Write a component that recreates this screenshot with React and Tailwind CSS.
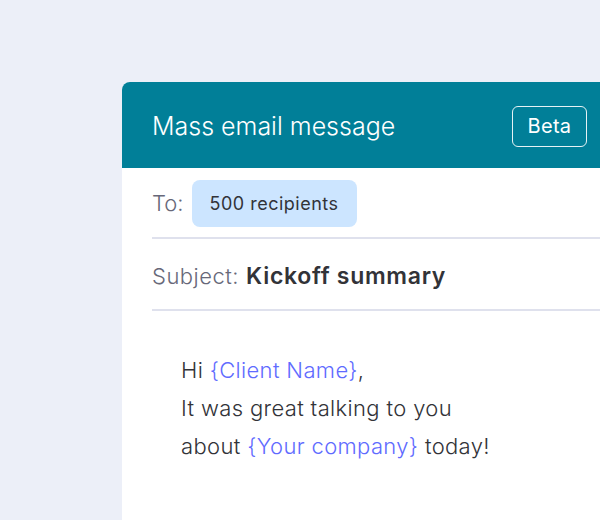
export default function App() {
  return (
    <div className="w-[600px] h-[520px] overflow-hidden bg-[#eceff8] pl-[122px] pt-[82px] font-['Inter',sans-serif]">
      <div className="w-[478px] h-[438px] bg-white rounded-tl-lg flex flex-col">
        {/* header */}
        <div className="h-[86px] shrink-0 bg-[#017f98] rounded-tl-lg flex items-center justify-between pl-[30px] pr-[13px]">
          <h1 className="text-[25px] font-light text-white pt-[3px]">Mass email message</h1>
          <span className="w-[75px] h-[41px] mt-[2px] border border-white/90 rounded-md flex items-center justify-center text-white text-[20px] font-normal tracking-[0.3px]">
            Beta
          </span>
        </div>

        {/* to */}
        <div className="ml-[30px] h-[71px] shrink-0 flex items-center gap-[8px] border-b-2 border-[#dfe1ed] pt-[2px]">
          <span className="text-[22px] font-light text-[#676879]">To:</span>
          <span className="h-[47px] w-[165px] rounded-lg bg-[#cce5ff] flex items-center justify-center text-[18px] tracking-[0.5px] text-[#323338]">
            500 recipients
          </span>
        </div>

        {/* subject */}
        <div className="ml-[30px] h-[72px] shrink-0 flex items-center gap-[7px] border-b-2 border-[#dfe1ed] pt-[4px]">
          <span className="text-[22px] font-light tracking-[0.5px] text-[#676879]">Subject:</span>
          <span className="text-[23px] font-semibold tracking-[0.7px] text-[#323338]">Kickoff summary</span>
        </div>

        {/* body */}
        <div className="pl-[59px] pt-[40px] text-[22px] font-light tracking-[0.35px] leading-[38px] text-[#323338]">
          <p>
            Hi <span className="text-[#5f6bff]">{'{Client Name}'}</span>,
          </p>
          <p>It was great talking to you</p>
          <p>
            about <span className="text-[#5f6bff]">{'{Your company}'}</span> today!
          </p>
        </div>
      </div>
    </div>
  );
}
